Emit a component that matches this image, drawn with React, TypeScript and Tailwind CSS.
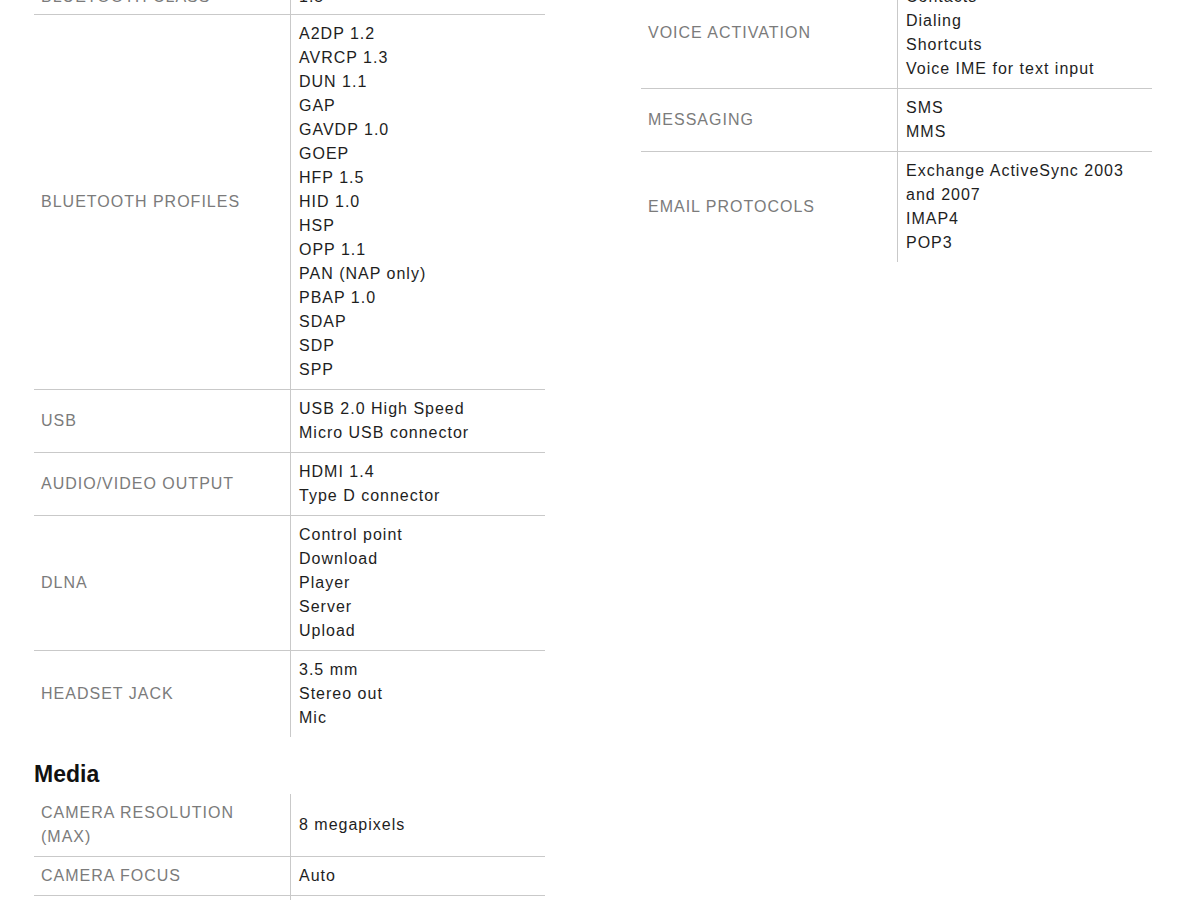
import React from "react";

type Row = { label: string; values: string[]; tight?: boolean };

const leftRows: Row[] = [
  { label: "Bluetooth class", values: ["1.5"], tight: true },
  {
    label: "Bluetooth profiles",
    values: [
      "A2DP 1.2",
      "AVRCP 1.3",
      "DUN 1.1",
      "GAP",
      "GAVDP 1.0",
      "GOEP",
      "HFP 1.5",
      "HID 1.0",
      "HSP",
      "OPP 1.1",
      "PAN (NAP only)",
      "PBAP 1.0",
      "SDAP",
      "SDP",
      "SPP",
    ],
  },
  { label: "USB", values: ["USB 2.0 High Speed", "Micro USB connector"] },
  { label: "Audio/video output", values: ["HDMI 1.4", "Type D connector"] },
  { label: "DLNA", values: ["Control point", "Download", "Player", "Server", "Upload"] },
  { label: "Headset jack", values: ["3.5 mm", "Stereo out", "Mic"] },
];

const mediaRows: Row[] = [
  { label: "Camera resolution (max)", values: ["8 megapixels"] },
  { label: "Camera focus", values: ["Auto"] },
  { label: "Video resolution", values: ["720p"] },
];

const rightRows: Row[] = [
  {
    label: "Voice activation",
    values: ["Contacts", "Dialing", "Shortcuts", "Voice IME for text input"],
  },
  { label: "Messaging", values: ["SMS", "MMS"] },
  { label: "Email protocols", values: ["Exchange ActiveSync 2003 and 2007", "IMAP4", "POP3"] },
];

function SpecTable({ rows }: { rows: Row[] }) {
  return (
    <div className="w-[511px]">
      {rows.map((r) => (
        <div key={r.label} className="flex border-b border-[#c9c9c9] last:border-b-0">
          <div
            className={
              r.tight
                ? "w-[256px] shrink-0 flex items-center pl-[7px] pr-[8px] py-[5px] uppercase text-[#7b7b7b]"
                : "w-[256px] shrink-0 flex items-center pl-[7px] pr-[8px] py-[7px] uppercase text-[#7b7b7b]"
            }
          >
            {r.label}
          </div>
          <div
            className={
              r.tight
                ? "flex-1 flex flex-col justify-center border-l border-[#c9c9c9] pl-[8px] pr-[6px] py-[5px] text-[#1e1e1e]"
                : "flex-1 flex flex-col justify-center border-l border-[#c9c9c9] pl-[8px] pr-[6px] py-[7px] text-[#1e1e1e]"
            }
          >
            {r.values.map((v) => (
              <div key={v}>{v}</div>
            ))}
          </div>
        </div>
      ))}
    </div>
  );
}

export default function App() {
  return (
    <div className="w-[1200px] h-[900px] overflow-hidden bg-white font-['Liberation_Sans',Arial,sans-serif] text-[16px] leading-[24px] tracking-[1px]">
      <div className="flex items-start gap-[96px] pl-[34px] -mt-[20px]">
        <div className="w-[511px]">
          <SpecTable rows={leftRows} />
          <h2 className="mt-[23px] mb-[6px] text-[23px] leading-[28px] font-bold tracking-normal text-[#111111]">
            Media
          </h2>
          <SpecTable rows={mediaRows} />
        </div>
        <div className="w-[511px] -mt-[2px]">
          <SpecTable rows={rightRows} />
        </div>
      </div>
    </div>
  );
}
